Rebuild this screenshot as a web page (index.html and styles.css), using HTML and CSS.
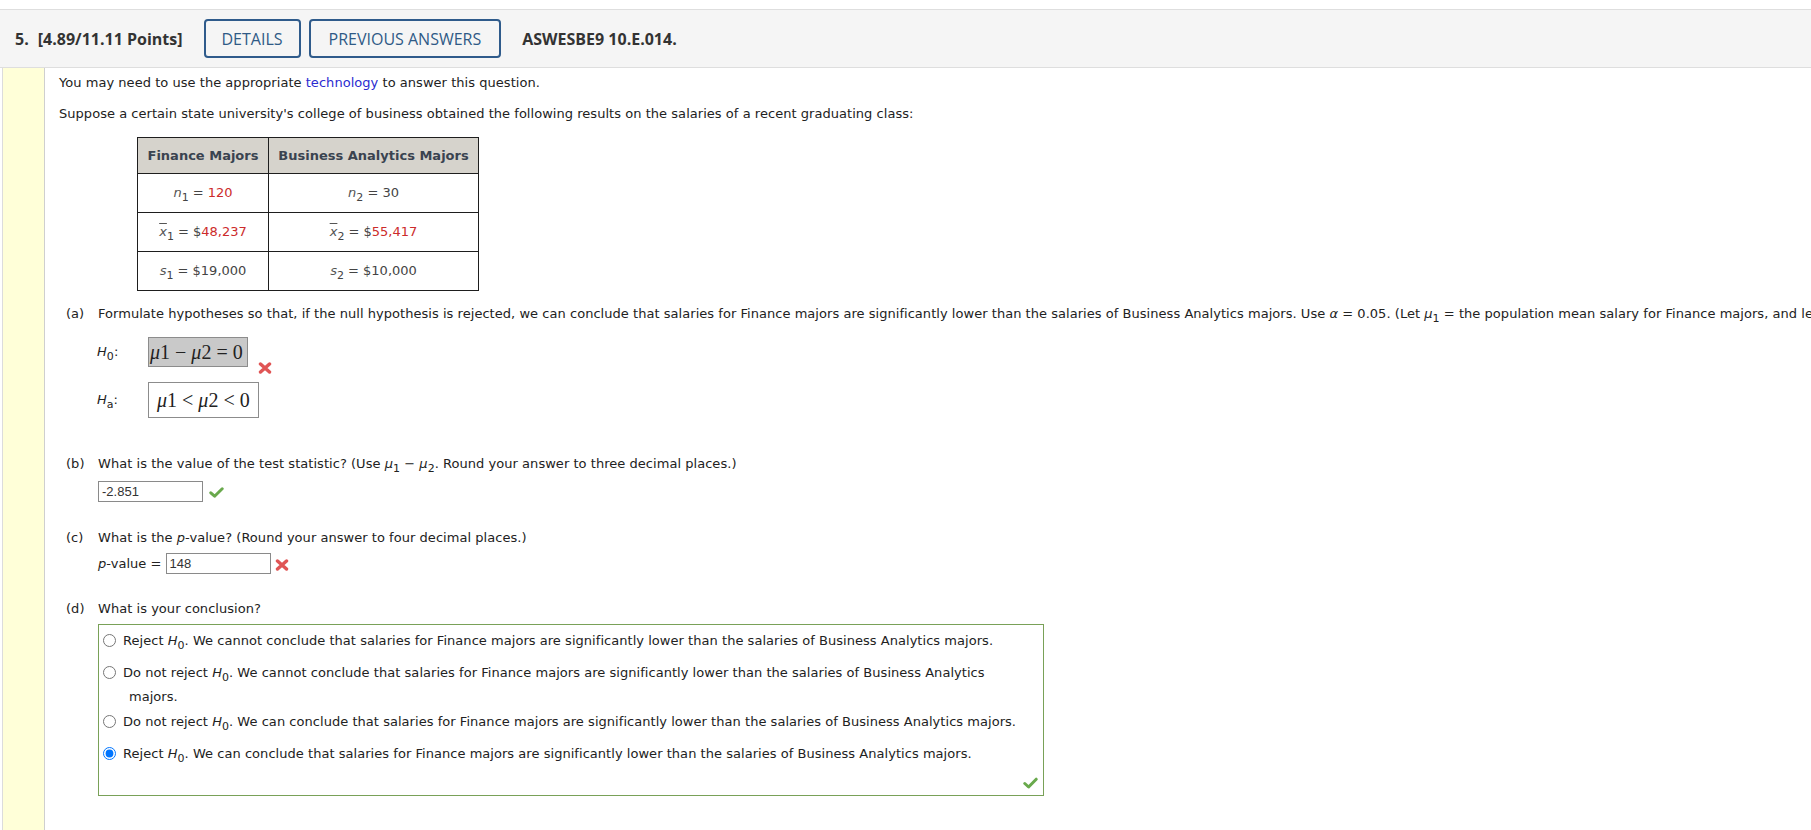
FILE: index.html
```html
<!DOCTYPE html>
<html lang="en">
<head>
<meta charset="utf-8">
<title>Question 5</title>
<link rel="stylesheet" href="styles.css">
</head>
<body>
<div class="page">
  <div class="qhead">
    <span class="qnum">5.</span>
    <span class="qpts">[4.89/11.11 Points]</span>
    <span class="btn btn-first">DETAILS</span>
    <span class="btn btn-second">PREVIOUS ANSWERS</span>
    <span class="qcode">ASWESBE9 10.E.014.</span>
  </div>
  <div class="qbody">
    <div class="side"></div>
    <div class="content">
      <p class="intro">You may need to use the appropriate <a class="link">technology</a> to answer this question.</p>
      <p>Suppose a certain state university's college of business obtained the following results on the salaries of a recent graduating class:</p>
      <table class="data">
        <tr>
          <th class="c1">Finance Majors</th>
          <th class="c2">Business Analytics Majors</th>
        </tr>
        <tr>
          <td><i class="var">n</i><span class="sub">1</span> = <span class="red">120</span></td>
          <td><i class="var">n</i><span class="sub">2</span> = 30</td>
        </tr>
        <tr>
          <td><i class="var xbar">x</i><span class="sub">1</span> = $<span class="red">48,237</span></td>
          <td><i class="var xbar">x</i><span class="sub">2</span> = $<span class="red">55,417</span></td>
        </tr>
        <tr>
          <td><i class="var">s</i><span class="sub">1</span> = $19,000</td>
          <td><i class="var">s</i><span class="sub">2</span> = $10,000</td>
        </tr>
      </table>

      <div class="part part-a">
        <div class="plabel">(a)</div>
        <div class="pbody">
          <div class="ptext nowrap">Formulate hypotheses so that, if the null hypothesis is rejected, we can conclude that salaries for Finance majors are significantly lower than the salaries of Business Analytics majors. Use <i>α</i> = 0.05. (Let <i>μ</i><span class="sub">1</span> = the population mean salary for Finance majors, and let <i>μ</i><span class="sub">2</span> = the population mean salary for Business Analytics majors.)</div>
          <div class="hyp hyp-0">
            <div class="hlabel"><i>H</i><span class="sub">0</span>:</div>
            <div class="mbox mbox-gray"><span class="math"><i>μ</i>1<span class="op">−</span><i>μ</i>2<span class="op">=</span>0</span></div>
            <svg class="xmark" width="14" height="12" viewBox="0 0 14 12"><path d="M2.5 2 L11.5 10 M11.5 2 L2.5 10" stroke="#e05555" stroke-width="3.4" stroke-linecap="round" fill="none"/></svg>
          </div>
          <div class="hyp hyp-a">
            <div class="hlabel"><i>H</i><span class="sub">a</span>:</div>
            <div class="mbox mbox-white"><span class="math"><i>μ</i>1<span class="op">&lt;</span><i>μ</i>2<span class="op">&lt;</span>0</span></div>
          </div>
        </div>
      </div>

      <div class="part part-b">
        <div class="plabel">(b)</div>
        <div class="pbody">
          <div class="ptext">What is the value of the test statistic? (Use <i>μ</i><span class="sub">1</span> − <i>μ</i><span class="sub">2</span>. Round your answer to three decimal places.)</div>
          <div class="ansrow ansrow-b">
            <div class="inbox">-2.851</div>
            <svg class="check" width="15" height="11" viewBox="0 0 15 11"><path d="M1.8 5.8 L5.6 9.2 L13.2 1.8" stroke="#69a94c" stroke-width="3" stroke-linecap="round" stroke-linejoin="round" fill="none"/></svg>
          </div>
        </div>
      </div>

      <div class="part part-c">
        <div class="plabel">(c)</div>
        <div class="pbody">
          <div class="ptext">What is the <i>p</i>-value? (Round your answer to four decimal places.)</div>
          <div class="ansrow ansrow-c">
            <span class="pval"><i>p</i>-value =</span>
            <div class="inbox">148</div>
            <svg class="xmark2" width="14" height="12" viewBox="0 0 14 12"><path d="M2.5 2 L11.5 10 M11.5 2 L2.5 10" stroke="#e05555" stroke-width="3.4" stroke-linecap="round" fill="none"/></svg>
          </div>
        </div>
      </div>

      <div class="part part-d">
        <div class="plabel">(d)</div>
        <div class="pbody">
          <div class="ptext">What is your conclusion?</div>
          <div class="choices">
            <label class="opt"><input type="radio" name="concl"><span class="otext">Reject <i>H</i><span class="sub">0</span>. We cannot conclude that salaries for Finance majors are significantly lower than the salaries of Business Analytics majors.</span></label>
            <label class="opt"><input type="radio" name="concl"><span class="otext">Do not reject <i>H</i><span class="sub">0</span>. We cannot conclude that salaries for Finance majors are significantly lower than the salaries of Business Analytics majors.</span></label>
            <label class="opt"><input type="radio" name="concl"><span class="otext">Do not reject <i>H</i><span class="sub">0</span>. We can conclude that salaries for Finance majors are significantly lower than the salaries of Business Analytics majors.</span></label>
            <label class="opt"><input type="radio" name="concl" checked><span class="otext">Reject <i>H</i><span class="sub">0</span>. We can conclude that salaries for Finance majors are significantly lower than the salaries of Business Analytics majors.</span></label>
            <div class="checkrow">
              <svg class="check" width="15" height="12" viewBox="0 0 15 12"><path d="M1.8 6.5 L5.6 10 L13.2 2.2" stroke="#69a94c" stroke-width="3" stroke-linecap="round" stroke-linejoin="round" fill="none"/></svg>
            </div>
          </div>
        </div>
      </div>
    </div>
  </div>
</div>
</body>
</html>
```

FILE: styles.css
```css
html, body {
  margin: 0;
  padding: 0;
  overflow: hidden;
  background: #ffffff;
}

body {
  font-family: "DejaVu Sans", Verdana, sans-serif;
  font-size: 13px;
  color: #222222;
}

.page {
  padding-top: 9px;
}

/* ---------- header ---------- */
.qhead {
  display: flex;
  align-items: center;
  height: 57px;
  padding-left: 15px;
  background: #f5f5f5;
  border-top: 1px solid #dedede;
  border-bottom: 1px solid #dedede;
  font-family: "Open Sans", "Liberation Sans", sans-serif;
  font-size: 16px;
  color: #333333;
}

.qnum {
  font-weight: 700;
  margin-right: 9px;
}

.qpts {
  font-weight: 700;
}

.btn {
  display: inline-flex;
  align-items: center;
  box-sizing: border-box;
  height: 39px;
  border: 2px solid #2f5b8b;
  border-radius: 4px;
  color: #2f5a86;
  font-size: 16px;
  font-weight: 500;
}

.btn-first {
  margin-left: 21px;
  padding: 0 16px;
}

.btn-second {
  margin-left: 8px;
  padding: 0 18px;
}

.qcode {
  margin-left: 21px;
  font-weight: 700;
}

/* ---------- body ---------- */
.qbody {
  display: flex;
  min-height: 762px;
}

.side {
  flex: none;
  width: 41px;
  margin-left: 2px;
  background: #ffffd8;
  border-left: 1px solid #dcdcdc;
  border-right: 1px solid #cfcfcf;
}

.content {
  flex: 1;
  min-width: 0;
  padding: 7px 0 0 14px;
  line-height: 16px;
  letter-spacing: 0.04px;
}

p {
  margin: 0;
}

.intro {
  margin-bottom: 15px;
}

.link {
  color: #2b2bd0;
  text-decoration: none;
}

.sub {
  font-size: 11px;
  vertical-align: -4px;
  line-height: 0;
}

i {
  font-style: italic;
}

/* ---------- table ---------- */
.data {
  margin: 15px 0 0 78px;
  border-collapse: collapse;
  color: #444444;
  letter-spacing: 0;
}

.data th,
.data td {
  border: 1px solid #1e1e1e;
  padding: 0 8px;
  text-align: center;
  white-space: nowrap;
}

.data th {
  height: 35px;
  background: #d6d3cc;
  color: #3a4350;
  font-weight: 700;
}

.data td {
  height: 38px;
}

.c1 {
  width: 114px;
}

.c2 {
  width: 193px;
}

.var {
  color: #555555;
}

.xbar {
  text-decoration: overline;
}

.red {
  color: #cc2b2b;
}

/* ---------- parts ---------- */
.part {
  display: flex;
  margin-left: 7px;
}

.plabel {
  flex: none;
  width: 32px;
}

.pbody {
  flex: 1;
  min-width: 0;
}

.nowrap {
  white-space: nowrap;
}

.part-a {
  margin-top: 15px;
}

.part-b {
  margin-top: 38px;
}

.part-c {
  margin-top: 28px;
}

.part-d {
  margin-top: 27px;
}

.hyp {
  display: flex;
  align-items: center;
}

.hyp-0 {
  margin-top: 15px;
}

.hyp-a {
  margin-top: 15px;
}

.hlabel {
  flex: none;
  width: 50px;
  margin-left: -1px;
  padding-right: 1px;
}

.mbox {
  box-sizing: border-box;
  display: flex;
  align-items: center;
  border: 1px solid #8c8c8c;
}

.mbox-gray {
  width: 100px;
  height: 30px;
  padding-left: 1px;
  background: #c9c9c9;
}

.mbox-white {
  width: 111px;
  height: 36px;
  padding-left: 8px;
  background: #ffffff;
}

.math {
  font-family: "Liberation Serif", "Times New Roman", serif;
  font-size: 20px;
  color: #222222;
  line-height: 20px;
  letter-spacing: 0;
}

.op {
  margin: 0 5px;
}

.xmark {
  align-self: flex-end;
  margin: 0 0 -7px 10px;
}

.ansrow {
  display: flex;
  align-items: center;
}

.ansrow-b {
  margin-top: 9px;
}

.ansrow-c {
  margin-top: 7px;
}

.inbox {
  box-sizing: border-box;
  width: 105px;
  height: 21px;
  padding-left: 3px;
  border: 1px solid #8a8a8a;
  font-family: "Liberation Sans", Arial, sans-serif;
  font-size: 13px;
  line-height: 19px;
  letter-spacing: 0;
  color: #333333;
  background: #ffffff;
}

.check {
  margin-left: 6px;
  margin-top: 2px;
}

.pval {
  margin-right: 4px;
}

.xmark2 {
  margin-left: 4px;
  margin-top: 2px;
}

/* ---------- choices ---------- */
.choices {
  box-sizing: border-box;
  width: 946px;
  margin-top: 7px;
  padding: 3px 5px 6px 4px;
  border: 1px solid #79a158;
}

.opt {
  display: flex;
  align-items: flex-start;
  padding: 4px 11px 4px 0;
  line-height: 17px;
}

.opt .sub {
  line-height: 20px;
}

.opt input {
  flex: none;
  width: 13px;
  height: 13px;
  margin: 2px 7px 0 0;
}

.otext {
  padding-left: 6px;
  text-indent: -6px;
}

.checkrow {
  display: flex;
  justify-content: flex-end;
  align-items: flex-end;
  height: 16px;
}

.checkrow .check {
  margin: 0;
}
```
